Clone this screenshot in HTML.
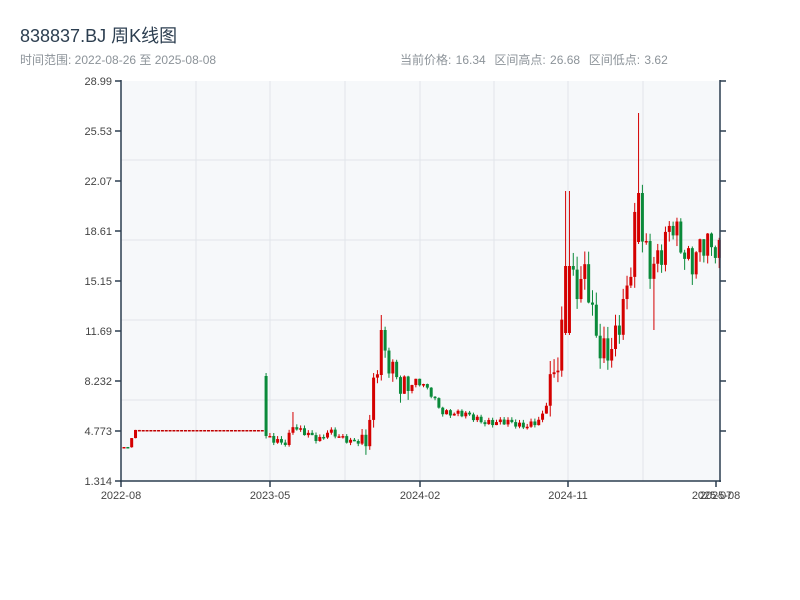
<!DOCTYPE html>
<html><head><meta charset="utf-8"><style>
body{margin:0;background:#fff;width:800px;height:600px;overflow:hidden;font-family:"Liberation Sans","Noto Sans CJK SC",sans-serif;}
.t{position:absolute;left:20px;top:22px;font-size:18px;color:#2c3e50;}
.s{position:absolute;left:20px;top:51px;font-size:12px;color:#8c9399;}
.r{position:absolute;left:400px;top:51px;font-size:12px;color:#8c9399;word-spacing:1px}
svg{position:absolute;left:0;top:0}
</style></head><body>
<div class="t">838837.BJ 周K线图</div>
<div class="s">时间范围: 2022-08-26 至 2025-08-08</div>
<div class="r">当前价格: 16.34&nbsp; 区间高点: 26.68&nbsp; 区间低点: 3.62</div>
<svg id="c" width="800" height="600" font-family="Liberation Sans, sans-serif" font-size="11" fill="#444">
<rect x="121" y="81" width="599" height="400" fill="#f6f8fa"/>
<g stroke="#e1e5ea" stroke-width="1">
<line x1="196" y1="81" x2="196" y2="481"/><line x1="270" y1="81" x2="270" y2="481"/><line x1="345" y1="81" x2="345" y2="481"/><line x1="420" y1="81" x2="420" y2="481"/><line x1="494" y1="81" x2="494" y2="481"/><line x1="568" y1="81" x2="568" y2="481"/><line x1="643" y1="81" x2="643" y2="481"/>
<line x1="121" y1="160" x2="720" y2="160"/><line x1="121" y1="240" x2="720" y2="240"/><line x1="121" y1="320" x2="720" y2="320"/><line x1="121" y1="400" x2="720" y2="400"/>
</g>
<g id="k"></g>
<g stroke="#2c3e50" stroke-width="1.5">
<line x1="121" y1="80" x2="121" y2="482"/><line x1="120" y1="481" x2="721" y2="481"/><line x1="720" y1="80" x2="720" y2="482"/>
<line x1="115" y1="81" x2="121" y2="81"/><line x1="115" y1="131" x2="121" y2="131"/><line x1="115" y1="181" x2="121" y2="181"/><line x1="115" y1="231" x2="121" y2="231"/><line x1="115" y1="281" x2="121" y2="281"/><line x1="115" y1="331" x2="121" y2="331"/><line x1="115" y1="381" x2="121" y2="381"/><line x1="115" y1="431" x2="121" y2="431"/><line x1="115" y1="481" x2="121" y2="481"/>
<line x1="720" y1="81" x2="726" y2="81"/><line x1="720" y1="131" x2="726" y2="131"/><line x1="720" y1="181" x2="726" y2="181"/><line x1="720" y1="231" x2="726" y2="231"/><line x1="720" y1="281" x2="726" y2="281"/><line x1="720" y1="331" x2="726" y2="331"/><line x1="720" y1="381" x2="726" y2="381"/><line x1="720" y1="431" x2="726" y2="431"/>
<line x1="121" y1="481" x2="121" y2="487"/><line x1="270" y1="481" x2="270" y2="487"/><line x1="420" y1="481" x2="420" y2="487"/><line x1="568" y1="481" x2="568" y2="487"/><line x1="716" y1="481" x2="716" y2="487"/>
</g>
<g text-anchor="end">
<text x="112" y="85">28.99</text><text x="112" y="135">25.53</text><text x="112" y="185">22.07</text><text x="112" y="235">18.61</text><text x="112" y="285">15.15</text><text x="112" y="335">11.69</text><text x="112" y="385">8.232</text><text x="112" y="435">4.773</text><text x="112" y="485">1.314</text>
</g>
<g text-anchor="middle">
<text x="121" y="499">2022-08</text><text x="270" y="499">2023-05</text><text x="420" y="499">2024-02</text><text x="568" y="499">2024-11</text><text x="712" y="499">2025-07</text><text x="720" y="499">2025-08</text>
</g>
</svg>
<script>
(function(){
var A=[[121,447],[127,447],[131,437],[134,430],[262,430],[264,436],[285,442],[292,425],[296,432],[320,438],[326,430],[340,440],[350,442],[365,436],[370,400],[378,360],[385,365],[392,370],[400,380],[410,380],[420,385],[430,395],[440,410],[460,415],[480,420],[500,423],[520,425],[540,420],[548,395],[556,365],[560,330],[565,300],[570,270],[578,290],[584,275],[590,320],[598,350],[610,340],[618,320],[625,300],[630,270],[635,210],[640,230],[648,260],[655,255],[662,250],[670,230],[680,250],[690,255],[700,240],[710,255],[720,260]];
function f(x){for(var i=1;i<A.length;i++){if(x<=A[i][0]){var a=A[i-1],b=A[i];return a[1]+(b[1]-a[1])*(x-a[0])/(b[0]-a[0]);}}return 260;}
function amp(x){return x<135?1:x<262?0:x<360?5:x<412?18:x<545?5:22;}
var g=document.getElementById('k'),s='',prev=447;
for(var i=0;i<156;i++){var x=122.5+i*3.84,n=Math.sin(i*2.3)*0.6+Math.sin(i*5.7)*0.4;
var c=f(x)+n*amp(x),o=prev;if(x>262&&x<266){o=376;c=436;}
var tp=Math.min(o,c),bt=Math.max(o,c),h=tp-Math.abs(Math.sin(i*3.1))*amp(x)*0.6,l=bt+Math.abs(Math.cos(i*1.7))*amp(x)*0.5;
var force=0;
if(Math.abs(x-380)<2){h=315;o=375;c=330;force=1;}
if(Math.abs(x-566)<2){h=191;o=333;c=266;force=1;}
if(Math.abs(x-636)<2){h=113;o=242;c=193;force=1;}
if(Math.abs(x-652)<2)l=330;if(Math.abs(x-292)<2)h=412;
if(force){tp=c;bt=o;l=Math.max(l,o+2);}
if(bt-tp<1.5)bt=tp+1.5;
var col=c<o?'#d40000':(c>o?'#0a8a3a':'#d40000');if(x>135&&x<262)col='#c00000';
s+='<line x1="'+(x+1.5)+'" x2="'+(x+1.5)+'" y1="'+h+'" y2="'+l+'" stroke="'+col+'" stroke-width="1"/><rect x="'+x+'" y="'+tp+'" width="3" height="'+(bt-tp)+'" fill="'+col+'"/>';
prev=c;}
g.innerHTML=s;
})();
</script>
</body></html>
